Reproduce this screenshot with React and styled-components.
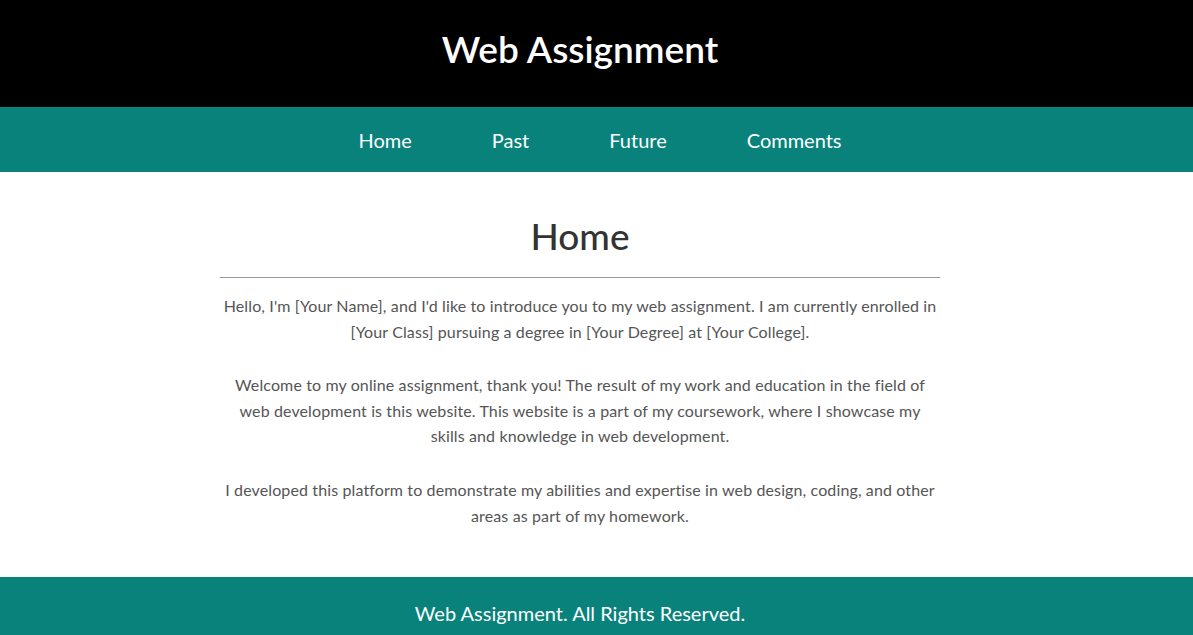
import React from "react"
import styled, { createGlobalStyle } from "styled-components"

const GlobalStyle = createGlobalStyle`
  * { box-sizing: border-box; }
  body {
    margin: 0;
    font-family: Lato, "Noto Sans", sans-serif;
    background: #fff;
  }
`

const links = ["Home", "Past", "Future", "Comments"]

function App() {
  return (
    <>
      <GlobalStyle />
      <Header>
        <Inner>
          <Title>Web Assignment</Title>
        </Inner>
      </Header>
      <Nav>
        <NavList>
          {links.map((l) => (
            <NavItem key={l}>
              <NavLink href="#">{l}</NavLink>
            </NavItem>
          ))}
        </NavList>
      </Nav>
      <Main>
        <Section>
          <Heading>Home</Heading>
          <Rule />
          <Text>
            Hello, I'm [Your Name], and I'd like to introduce you to my web assignment. I am currently enrolled in
            [Your Class] pursuing a degree in [Your Degree] at [Your College].
          </Text>
          <Text>
            Welcome to my online assignment, thank you! The result of my work and education in the field of
            web development is this website. This website is a part of my coursework, where I showcase my
            skills and knowledge in web development.
          </Text>
          <Text>
            I developed this platform to demonstrate my abilities and expertise in web design, coding, and other
            areas as part of my homework.
          </Text>
        </Section>
      </Main>
      <Footer>
        <Inner>
          <FooterText>Web Assignment. All Rights Reserved.</FooterText>
        </Inner>
      </Footer>
    </>
  )
}

export default App

const Inner = styled.div`
  width: calc(100% - 33px);
  text-align: center;
`
const Header = styled.header`
  background: #000;
  height: 107px;
  display: flex;
  align-items: center;
`
const Title = styled.h1`
  margin: 0 0 10px;
  color: #fff;
  font-size: 37px;
  font-weight: 600;
`
const Nav = styled.nav`
  background: #08827a;
  height: 65px;
  display: flex;
  align-items: center;
`
const NavList = styled.ul`
  list-style: none;
  margin: 0;
  padding: 0 0 0 40px;
  width: calc(100% - 33px);
  display: flex;
  justify-content: center;
`
const NavItem = styled.li`
  padding: 0 40px;
`
const NavLink = styled.a`
  color: #fff;
  text-decoration: none;
  font-size: 20px;
`
const Main = styled.main`
  padding: 40px 0 49px;
`
const Section = styled.section`
  width: 720px;
  margin-left: calc((100% - 33px - 720px) / 2);
  text-align: center;
`
const Heading = styled.h2`
  margin: 0;
  font-size: 37px;
  font-weight: 500;
  color: #333;
  line-height: 1.3;
`
const Rule = styled.hr`
  border: none;
  border-top: 1px solid #999;
  margin: 17px 0 15px;
`
const Text = styled.p`
  margin: 0 0 28px;
  padding: 0 3px;
  font-size: 16px;
  letter-spacing: 0.12px;
  line-height: 25.6px;
  color: #555;
  &:last-child { margin-bottom: 0; }
`
const Footer = styled.footer`
  background: #08827a;
  padding: 24px 0 20px;
`
const FooterText = styled.p`
  margin: 0;
  color: #fff;
  font-size: 20px;
`
